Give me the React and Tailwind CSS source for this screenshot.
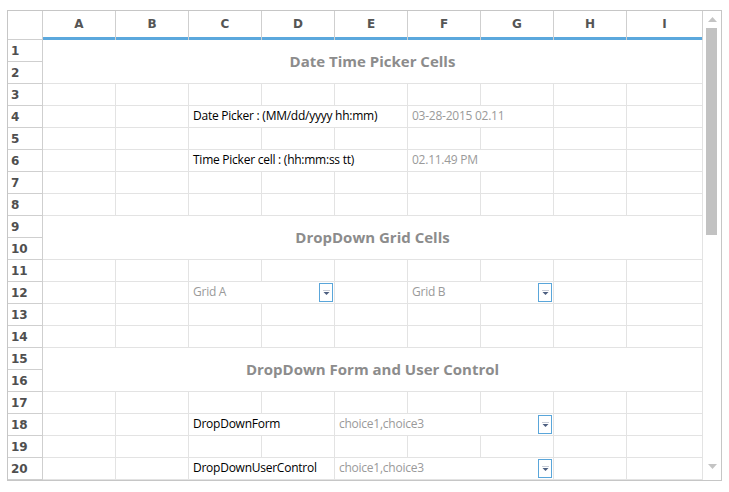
import React from 'react';

const COLS = ['A', 'B', 'C', 'D', 'E', 'F', 'G', 'H', 'I'];
const cellB = 'border-r border-b border-[#e3e3e3]';
const font = { fontFamily: '"Open Sans", "Noto Sans", sans-serif' };

function Empty({ span = '' }) {
  return <div className={`${cellB} ${span}`} />;
}

function DropBtn() {
  return (
    <div className="absolute right-[1px] top-[1px] w-[14px] h-[19px] border border-[#5aa6da] bg-white flex items-center justify-center">
      <svg width="7" height="6" viewBox="0 0 7 6">
        <rect x="0" y="0" width="7" height="1" fill="#c8ccd6" />
        <polygon points="0.5,2 6.5,2 3.5,5" fill="#4d5f80" />
      </svg>
    </div>
  );
}

function TextCell({ span, text, gray, btn }) {
  return (
    <div
      className={`${cellB} ${span} relative flex items-center pl-[4px] pb-[2px] text-[12px] tracking-[-0.25px] whitespace-nowrap ${gray ? 'text-[#9a9a9a]' : 'text-black'}`}
      style={font}
    >
      {text}
      {btn && <DropBtn />}
    </div>
  );
}

function Title({ text }) {
  return (
    <div
      className={`${cellB} col-span-9 row-span-2 flex items-center justify-center pb-[1px] text-[15px] font-bold text-[#8c8c8c]`}
      style={font}
    >
      {text}
    </div>
  );
}

function RowHead({ n }) {
  return (
    <div
      className="border-r border-b border-[#cfcfcf] flex items-center pl-[3px] text-[12px] font-bold text-[#4f4f4f]"
      style={{ fontFamily: '"DejaVu Sans", sans-serif' }}
    >
      {n}
    </div>
  );
}

function EmptyRow() {
  return COLS.map((c) => <Empty key={c} />);
}

export default function App() {
  const rows = [];
  const push = (n, content) => {
    rows.push(<RowHead key={'h' + n} n={n} />);
    if (content) rows.push(<React.Fragment key={'r' + n}>{content}</React.Fragment>);
  };

  push(1, <Title text="Date Time Picker Cells" />);
  push(2, null);
  push(3, <EmptyRow />);
  push(
    4,
    <>
      <Empty />
      <Empty />
      <TextCell span="col-span-3" text="Date Picker : (MM/dd/yyyy hh:mm)" />
      <TextCell span="col-span-2" text="03-28-2015 02.11" gray />
      <Empty />
      <Empty />
    </>
  );
  push(5, <EmptyRow />);
  push(
    6,
    <>
      <Empty />
      <Empty />
      <TextCell span="col-span-3" text="Time Picker cell : (hh:mm:ss tt)" />
      <TextCell span="col-span-2" text="02.11.49 PM" gray />
      <Empty />
      <Empty />
    </>
  );
  push(7, <EmptyRow />);
  push(8, <EmptyRow />);
  push(9, <Title text="DropDown Grid Cells" />);
  push(10, null);
  push(11, <EmptyRow />);
  push(
    12,
    <>
      <Empty />
      <Empty />
      <TextCell span="col-span-2" text="Grid A" gray btn />
      <Empty />
      <TextCell span="col-span-2" text="Grid B" gray btn />
      <Empty />
      <Empty />
    </>
  );
  push(13, <EmptyRow />);
  push(14, <EmptyRow />);
  push(15, <Title text="DropDown Form and User Control" />);
  push(16, null);
  push(17, <EmptyRow />);
  push(
    18,
    <>
      <Empty />
      <Empty />
      <TextCell span="col-span-2" text="DropDownForm" />
      <TextCell span="col-span-3" text="choice1,choice3" gray btn />
      <Empty />
      <Empty />
    </>
  );
  push(19, <EmptyRow />);
  push(
    20,
    <>
      <Empty />
      <Empty />
      <TextCell span="col-span-2" text="DropDownUserControl" />
      <TextCell span="col-span-3" text="choice1,choice3" gray btn />
      <Empty />
      <Empty />
    </>
  );

  return (
    <div className="w-[729px] h-[492px] bg-white pt-[10px] pl-[7px]">
      <div className="w-[715px] h-[471px] border border-[#c6c6c6] flex bg-white">
        <div className="grid grid-cols-[35px_repeat(8,73px)_76px] grid-rows-[29px_repeat(20,22px)]">
          <div className="border-r border-b border-[#cfcfcf]" />
          {COLS.map((c) => (
            <div
              key={c}
              className="border-r border-[#cfcfcf] flex flex-col"
            >
              <div
                className="flex-1 flex items-center justify-center text-[12px] font-bold text-[#555555]"
                style={{ fontFamily: '"DejaVu Sans", sans-serif' }}
              >
                {c}
              </div>
              <div className="h-[3px] bg-[#5ba8dd]" />
            </div>
          ))}
          {rows}
        </div>
        <div className="w-[18px] flex flex-col">
          <div className="h-[17px] flex items-center justify-center">
            <svg width="9" height="5" viewBox="0 0 9 5">
              <polygon points="0,5 9,5 4.5,0" fill="#c4c4c4" />
            </svg>
          </div>
          <div className="ml-[3px] w-[11px] h-[207px] bg-[#c2c2c2]" />
          <div className="flex-1" />
          <div className="h-[17px] flex items-start justify-center pt-[1px]">
            <svg width="9" height="5" viewBox="0 0 9 5">
              <polygon points="0,0 9,0 4.5,5" fill="#c4c4c4" />
            </svg>
          </div>
        </div>
      </div>
    </div>
  );
}
